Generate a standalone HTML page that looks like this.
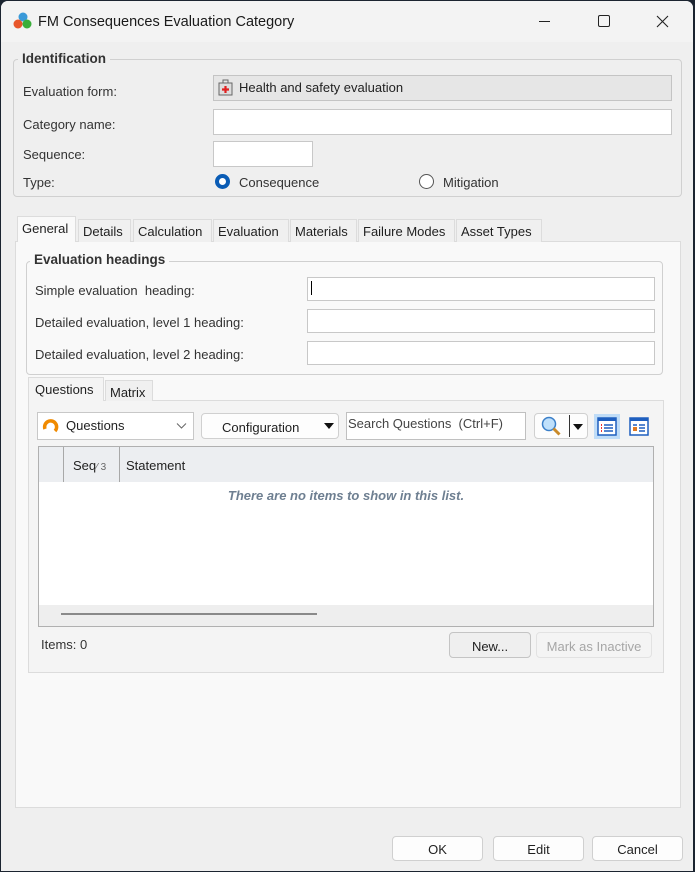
<!DOCTYPE html>
<html><head><style>
*{box-sizing:border-box;margin:0;padding:0}
body{width:695px;height:872px;background:#1b2430;font-family:"Liberation Sans",sans-serif;font-size:13px;color:#1f1f1f;position:relative;overflow:hidden}
.win{position:absolute;left:1px;top:1px;width:692px;height:870px;background:#efefef;border-radius:7px 7px 0 0;overflow:hidden}
.a{position:absolute}
.title{left:0;top:0;width:692px;height:41px;background:#f3f3f3}
.inp{position:absolute;background:#fff;border:1px solid #c8c8c8}
.grp{position:absolute;border:1px solid #d0d0d0;border-radius:4px}
.leg{position:absolute;font-weight:bold;font-size:13.5px;color:#333;padding:0 4px;}
.tab{position:absolute;top:218px;height:23px;border:1px solid #dcdcdc;border-bottom:none;background:#f0f0f0;font-size:13px;padding:4px 0 0 4px;color:#1f1f1f}
.btn{position:absolute;background:#fdfdfd;border:1px solid #d0d0d0;border-radius:4px;text-align:center;font-size:13px}
.lbl{position:absolute;font-size:13px;color:#333}
</style></head><body>
<div class="win">
<div class="a title"></div>
<svg class="a" style="left:12px;top:11px" width="20" height="18"><circle cx="10" cy="5" r="4.5" fill="#3a9ad9"/><circle cx="5" cy="12" r="4.5" fill="#e8562a"/><circle cx="14" cy="12" r="4.5" fill="#3aae3a"/></svg>
<div class="a" style="left:37px;top:13px;font-size:14.5px;color:#1a1a1a">FM Consequences Evaluation Category</div>
<div class="a" style="left:538px;top:20px;width:11px;height:1px;background:#222"></div>
<div class="a" style="left:597px;top:14px;width:12px;height:12px;border:1px solid #222;border-radius:2px"></div>
<svg class="a" style="left:655px;top:14px" width="13" height="13"><path d="M1 1L12 12M12 1L1 12" stroke="#222" stroke-width="1.1"/></svg>

<div class="grp" style="left:12px;top:58px;width:669px;height:138px"></div>
<div class="leg" style="left:17px;top:50px;background:#efefef">Identification</div>
<div class="lbl" style="left:22px;top:83px">Evaluation form:</div>
<div class="lbl" style="left:22px;top:116px">Category name:</div>
<div class="lbl" style="left:22px;top:146px">Sequence:</div>
<div class="lbl" style="left:22px;top:174px">Type:</div>
<div class="inp" style="left:212px;top:74px;width:459px;height:26px;background:#e6e6e6;border-color:#c4c4c4"></div>
<svg class="a" style="left:216px;top:78px" width="18" height="18"><rect x="2" y="4" width="13" height="12" fill="#ddd" stroke="#666"/><rect x="6" y="1" width="5" height="3" fill="none" stroke="#666"/><path d="M8.5 7v7M5 10.5h7" stroke="#e02020" stroke-width="2.2"/></svg>
<div class="lbl" style="left:238px;top:79px;color:#222">Health and safety evaluation</div>
<div class="inp" style="left:212px;top:108px;width:459px;height:26px"></div>
<div class="inp" style="left:212px;top:140px;width:100px;height:26px"></div>
<div class="a" style="left:214px;top:173px;width:15px;height:15px;border-radius:50%;border:4.5px solid #0a5cb5;background:#fff"></div>
<div class="lbl" style="left:238px;top:174px">Consequence</div>
<div class="a" style="left:418px;top:173px;width:15px;height:15px;border-radius:50%;border:1px solid #555;background:#fff"></div>
<div class="lbl" style="left:442px;top:174px">Mitigation</div>

<div class="a" style="left:14px;top:240px;width:666px;height:567px;background:#f9f9f9;border:1px solid #dcdcdc"></div>
<div class="tab" style="left:16px;width:59px;top:215px;height:26px;background:#f9f9f9">General</div>
<div class="tab" style="left:77px;width:53px">Details</div>
<div class="tab" style="left:132px;width:79px">Calculation</div>
<div class="tab" style="left:212px;width:76px">Evaluation</div>
<div class="tab" style="left:289px;width:67px">Materials</div>
<div class="tab" style="left:357px;width:97px">Failure Modes</div>
<div class="tab" style="left:455px;width:86px">Asset Types</div>

<div class="grp" style="left:25px;top:260px;width:637px;height:114px"></div>
<div class="leg" style="left:29px;top:251px;background:#f9f9f9">Evaluation headings</div>
<div class="lbl" style="left:34px;top:282px">Simple evaluation &nbsp;heading:</div>
<div class="lbl" style="left:34px;top:314px">Detailed evaluation, level 1 heading:</div>
<div class="lbl" style="left:34px;top:346px">Detailed evaluation, level 2 heading:</div>
<div class="inp" style="left:306px;top:276px;width:348px;height:24px"></div>
<div class="a" style="left:310px;top:280px;width:1px;height:14px;background:#000"></div>
<div class="inp" style="left:306px;top:308px;width:348px;height:24px"></div>
<div class="inp" style="left:306px;top:340px;width:348px;height:24px"></div>

<div class="a" style="left:27px;top:399px;width:636px;height:273px;background:#f4f4f4;border:1px solid #dcdcdc"></div>
<div class="tab" style="left:27px;top:376px;width:76px;height:24px;background:#f4f4f4;padding-left:6px">Questions</div>
<div class="tab" style="left:104px;top:379px;width:48px;height:21px;padding-top:4px">Matrix</div>

<div class="inp" style="left:36px;top:411px;width:157px;height:28px;border-color:#c8c8c8"></div>
<svg class="a" style="left:40px;top:416px" width="20" height="18"><path d="M4 12A6 6 0 1 1 14 14" fill="none" stroke="#f08a00" stroke-width="3.5"/></svg>
<div class="lbl" style="left:65px;top:417px;color:#222">Questions</div>
<svg class="a" style="left:175px;top:421px" width="11" height="8"><path d="M1 1.5l4.5 4.5 4.5-4.5" fill="none" stroke="#666"/></svg>
<div class="btn" style="left:200px;top:412px;width:138px;height:26px;padding-top:6px;text-align:left;padding-left:20px">Configuration</div>
<svg class="a" style="left:323px;top:422px" width="10" height="6"><path d="M0 0h10L5 6z" fill="#111"/></svg>
<div class="inp" style="left:345px;top:411px;width:180px;height:28px;border-color:#c0c0c0"></div>
<div class="lbl" style="left:347px;top:415px;color:#444">Search Questions &nbsp;(Ctrl+F)</div>
<div class="btn" style="left:533px;top:412px;width:54px;height:26px"></div>
<svg class="a" style="left:539px;top:414px" width="24" height="22"><circle cx="9" cy="9" r="6.5" fill="#bfe0fb" stroke="#3a7fc9" stroke-width="1.5"/><path d="M13.5 13.5l6 6" stroke="#c98a2a" stroke-width="3"/></svg>
<div class="a" style="left:568px;top:414px;width:1px;height:22px;background:#333"></div>
<svg class="a" style="left:572px;top:423px" width="10" height="6"><path d="M0 0h10L5 6z" fill="#111"/></svg>
<div class="a" style="left:593px;top:413px;width:26px;height:25px;background:#bfdcf7"></div>
<svg class="a" style="left:596px;top:416px" width="20" height="20"><rect x="1" y="1" width="18" height="17" fill="#fff" stroke="#1f5fbf" stroke-width="1.5"/><rect x="1" y="1" width="18" height="3" fill="#1f5fbf"/><path d="M4 8h1M4 11h1M4 14h1" stroke="#e33" stroke-width="2"/><path d="M7 8h9M7 11h9M7 14h9" stroke="#1f5fbf" stroke-width="1.5"/></svg>
<svg class="a" style="left:628px;top:416px" width="20" height="20"><rect x="1" y="1" width="18" height="17" fill="#fff" stroke="#1f5fbf" stroke-width="1.5"/><rect x="1" y="1" width="18" height="3" fill="#1f5fbf"/><rect x="4" y="10" width="4" height="4" fill="#e07820"/><path d="M10 8h6M10 11h6M10 14h6M4 8h4" stroke="#1f5fbf" stroke-width="1.5"/></svg>

<div class="a" style="left:37px;top:445px;width:616px;height:181px;background:#fff;border:1px solid #b0b0b0"></div>
<div class="a" style="left:38px;top:446px;width:614px;height:35px;background:#eceef1"></div>
<div class="a" style="left:62px;top:446px;width:1px;height:35px;background:#a8a8a8"></div>
<div class="a" style="left:118px;top:446px;width:1px;height:35px;background:#a8a8a8"></div>
<div class="lbl" style="left:72px;top:457px;color:#222">Seq<span style="font-size:10px;color:#666">⁄ 3</span></div>
<div class="lbl" style="left:125px;top:457px;color:#222">Statement</div>
<div class="a" style="left:38px;top:487px;width:614px;text-align:center;font-style:italic;font-weight:bold;color:#6e7f91;font-size:13px">There are no items to show in this list.</div>
<div class="a" style="left:38px;top:604px;width:614px;height:21px;background:#eeeeee"></div>
<div class="a" style="left:60px;top:612px;width:256px;height:2px;background:#8a8a8a"></div>

<div class="lbl" style="left:40px;top:636px">Items: 0</div>
<div class="btn" style="left:448px;top:631px;width:82px;height:26px;padding-top:6px;background:#efefef;border-color:#c4c4c4">New...</div>
<div class="btn" style="left:535px;top:631px;width:116px;height:26px;padding-top:6px;background:#f4f4f4;border-color:#e2e2e2;color:#a6a6a6">Mark as Inactive</div>

<div class="btn" style="left:391px;top:835px;width:91px;height:25px;padding-top:5px">OK</div>
<div class="btn" style="left:492px;top:835px;width:91px;height:25px;padding-top:5px">Edit</div>
<div class="btn" style="left:591px;top:835px;width:91px;height:25px;padding-top:5px">Cancel</div>
</div>
</body></html>
